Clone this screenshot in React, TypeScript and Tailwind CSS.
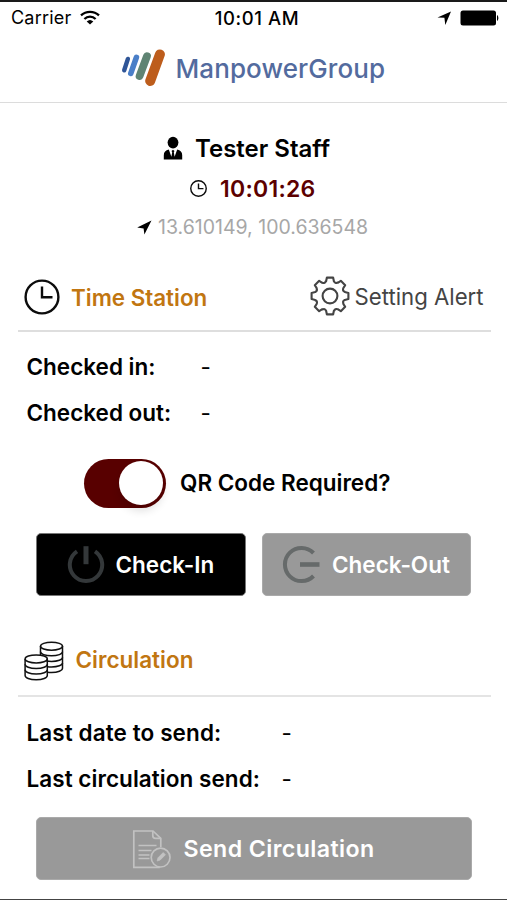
import type { ReactNode } from "react"

const teeth = [0, 45, 90, 135, 180, 225, 270, 315]

function gearPath() {
  const point = (x: number, y: number, deg: number) => {
    const a = (deg * Math.PI) / 180
    const px = 20 + x * Math.cos(a) - y * Math.sin(a)
    const py = 20 + x * Math.sin(a) + y * Math.cos(a)
    return `${px.toFixed(2)} ${py.toFixed(2)}`
  }
  return (
    teeth
      .map(
        (deg, i) =>
          `${i === 0 ? "M" : "L"}${point(-3.9, -14.8, deg)} L${point(-3.1, -18.4, deg)} L${point(3.1, -18.4, deg)} L${point(3.9, -14.8, deg)} Q${point(5.4, -12.2, deg)} ${point(7.2, -13.4, deg)}`
      )
      .join(" ") + " Z"
  )
}

function WifiIcon() {
  return (
    <svg className="mb-[2px] ml-[9px] h-[15px] w-[20px]" viewBox="0 0 20 15" fill="none" stroke="#000" strokeWidth="2.3">
      <path d="M1 5.4a13 13 0 0 1 18 0" />
      <path d="M4.4 9a8 8 0 0 1 11.2 0" />
      <path d="M10 14.6 6.7 11.6a4.8 4.8 0 0 1 6.6 0Z" fill="#000" stroke="none" />
    </svg>
  )
}

function Logo() {
  return (
    <svg className="h-[40px] w-[46px]" viewBox="0 0 46 40" fill="none" strokeLinecap="round">
      <path d="M8.9 10.9 5.2 22.3" stroke="#2f5597" strokeWidth="4.4" />
      <path d="M17.4 9.3 11.8 25.4" stroke="#4a7fc8" strokeWidth="5.6" />
      <path d="M28 8.2 20.6 28" stroke="#5f8473" strokeWidth="7.8" />
      <path d="M40.9 6.4 31.2 33" stroke="#bd5d1c" strokeWidth="10" />
    </svg>
  )
}

function UserIcon() {
  return (
    <svg className="-mt-[2px] h-[24px] w-[20px]" viewBox="0 0 20 24">
      <ellipse cx="10" cy="6.6" rx="5.4" ry="5.8" />
      <path d="M.8 23.4v-4.2c0-3.2 1.8-4.8 5-5.6l2.6 7.2.8-4.6-.7-1.2L10 13.8l1.5 1.2-.7 1.2.8 4.6 2.6-7.2c3.2.8 5 2.4 5 5.6v4.2z" />
    </svg>
  )
}

function ClockIcon({ className, width }: { className: string; width: number }) {
  return (
    <svg className={className} viewBox="0 0 36 36" fill="none" stroke="#0c0c0c" strokeWidth={width}>
      <circle cx="18" cy="18" r="16.4" />
      <path d="M18 7.5v10.8h10.5" />
    </svg>
  )
}

function CoinsIcon() {
  return (
    <svg className="mt-[2px] h-[40px] w-[40px]" viewBox="0 0 40 40" fill="none" stroke="#111" strokeWidth="1.5">
      <path d="M16.5 5v9.2M38.5 5v22.3c0 2.2-4.6 4.2-11 4.2-1.4 0-2.8-.1-4-.3" />
      <ellipse cx="27.5" cy="5.2" rx="11" ry="4" />
      <path d="M16.5 10.8c0 2.1 4.6 4 11 4s11-1.9 11-4M22.5 20c1.5.3 3.2.4 5 .4 6.4 0 11-1.9 11-4M23.5 25.7c1.2.2 2.6.3 4 .3 6.4 0 11-1.9 11-4" />
      <ellipse cx="12.2" cy="17.9" rx="11.1" ry="4" />
      <path d="M1.1 17.9v16.5c0 2.4 4.6 4.4 11.1 4.4s11.1-2 11.1-4.4V17.9" />
      <path d="M1.1 23.3c0 2.3 4.6 4.2 11.1 4.2s11.1-1.9 11.1-4.2M1.1 28.8c0 2.3 4.6 4.2 11.1 4.2s11.1-1.9 11.1-4.2" />
    </svg>
  )
}

function DocumentIcon() {
  return (
    <svg className="h-[40px] w-[40px]" viewBox="0 0 40 40" fill="none" stroke="#c2c2c2" strokeWidth="1.7">
      <path d="M28.8 18V9.4L21 2H1.8v36.4h26" />
      <path d="M20.8 2v4.8c0 1.8.8 2.6 2.6 2.6h5.4" />
      <path d="M6.5 16.5h18M6.5 21.5h13M6.5 26h11M6.5 29.5h11" />
      <circle cx="28.6" cy="28.6" r="9.4" />
      <path d="m25.2 32 .8-3.2 5.2-5.2 2.2 2.2-5.2 5.2z" fill="#c2c2c2" strokeWidth=".8" />
    </svg>
  )
}

function Field({ label, labelClass }: { label: string; labelClass: string }) {
  return (
    <div className="flex h-[46px] items-center pl-[26.5px] text-[22.5px] leading-none">
      <span className={labelClass}>{label}</span>
      <span>-</span>
    </div>
  )
}

function Button({ className, children }: { className: string; children: ReactNode }) {
  return (
    <button
      className={`flex h-[63px] items-center rounded-[5px] border-[1.5px] leading-none font-semibold text-white ${className}`}
    >
      {children}
    </button>
  )
}

export default function App() {
  return (
    <div className="h-[900px] w-[507px] overflow-hidden border-t-2 border-b border-t-[#1a1a1a] border-b-[#444] bg-white font-['Inter',sans-serif] text-black">
      <div className="grid h-[32px] grid-cols-3 items-center px-[10px] text-[18px] leading-none">
        <div className="flex items-center">
          <span className="pl-px tracking-[0.2px]">Carrier</span>
          <WifiIcon />
        </div>
        <span className="pl-[7px] text-center text-[18.5px] font-medium tracking-[0.6px]">10:01 AM</span>
        <div className="flex items-center justify-end">
          <svg className="mr-[9px] h-[14px] w-[14px]" viewBox="0 0 14 14">
            <path d="M14 .5 8.3 14l-.9-7.3L.5 6.4z" />
          </svg>
          <svg className="-mr-[2px] h-[16px] w-[39px]" viewBox="0 0 39 16">
            <rect x=".5" y=".5" width="35.5" height="15" rx="2.5" />
            <path d="M37 5c1.8.8 1.8 5.2 0 6z" />
          </svg>
        </div>
      </div>

      <header className="flex h-[69px] items-center border-b border-[#dcdcdc] pl-[119px]">
        <Logo />
        <span className="mt-[2px] ml-[10.5px] text-[26px] leading-none font-medium tracking-[0.1px] text-[#536b9e]">
          ManpowerGroup
        </span>
      </header>

      <div className="flex h-[162px] flex-col pt-[25px]">
        <div className="flex h-[41px] items-center pl-[163px]">
          <UserIcon />
          <span className="ml-[12px] text-[24px] leading-none font-semibold">Tester Staff</span>
        </div>
        <div className="flex h-[40px] items-center pl-[190px]">
          <ClockIcon className="-mt-px h-[17px] w-[17px]" width={3} />
          <span className="ml-[13px] text-[23px] leading-none font-semibold tracking-[0.25px] text-[#5c0000]">10:01:26</span>
        </div>
        <div className="flex h-[37px] items-center pl-[137px]">
          <svg className="h-[15px] w-[15px]" viewBox="0 0 15 15">
            <path d="M14.5.5 7.4 14.5 6.6 8.4.2 7.4z" />
          </svg>
          <span className="ml-[6px] text-[19.5px] leading-none text-[#a7a7a7]">13.610149, 100.636548</span>
        </div>
      </div>

      <section>
        <div className="mr-[16px] ml-[18px] flex h-[67px] items-center border-b-2 border-[#dedede] pl-[6px]">
          <ClockIcon className="-mt-px h-[36px] w-[36px]" width={2.4} />
          <h2 className="mt-px ml-[11px] w-[239px] text-[22.4px] leading-none font-semibold text-[#c17611]">
            Time Station
          </h2>
          <svg
            className="mb-[3px] h-[40px] w-[40px]"
            viewBox="0 0 40 40"
            fill="none"
            stroke="#444"
            strokeWidth="2.1"
            strokeLinejoin="round"
          >
            <path d={gearPath()} />
            <circle cx="20" cy="20" r="7.4" />
          </svg>
          <span className="mb-px ml-[4.5px] text-[22.2px] leading-none whitespace-nowrap text-[#444]">Setting Alert</span>
        </div>
        <div className="pt-[12px]">
          <Field label="Checked in:" labelClass="w-[174px] font-semibold" />
          <Field label="Checked out:" labelClass="w-[174px] font-semibold" />
        </div>
        <div className="flex h-[94px] items-center pl-[84px]">
          <div className="flex h-[49px] w-[82px] items-center justify-end rounded-full bg-[#580000] pr-[3px]">
            <div className="h-[44px] w-[44px] rounded-full bg-white shadow-[0_6px_8px_rgba(0,0,0,0.12)]" />
          </div>
          <span className="ml-[14px] text-[22.5px] leading-none font-semibold">QR Code Required?</span>
        </div>
        <div className="flex gap-4 px-[36px] pt-[3px] text-[22.5px]">
          <Button className="w-[210px] border-[#777] bg-black pl-[30px]">
            <svg className="h-[40px] w-[38px]" viewBox="0 0 38 40" fill="none" stroke="#34383a" strokeWidth="4">
              <path d="M10 6.3a16.2 16.2 0 1 0 18 0" />
              <path d="M19 1.2v18" strokeWidth="5" />
            </svg>
            <span className="mt-px ml-[10.5px]">Check-In</span>
          </Button>
          <Button className="w-[210px] border-[#aaa] bg-[#999] pl-[19px]">
            <svg className="h-[40px] w-[40px]" viewBox="0 0 40 40" fill="none" stroke="#666a6a" strokeWidth="4">
              <path d="M31.5 8a16.6 16.6 0 1 0 0 23" />
              <path d="M18 19.5H37.5" strokeWidth="4.6" />
            </svg>
            <span className="mt-px ml-[10.5px]">Check-Out</span>
          </Button>
        </div>
      </section>

      <section className="pt-[28px]">
        <div className="mr-[16px] ml-[18px] flex h-[73px] items-center border-b-2 border-[#e4e4e4] pl-[6px]">
          <CoinsIcon />
          <h2 className="mt-px ml-[11.5px] text-[22.5px] leading-none font-semibold text-[#c17611]">Circulation</h2>
        </div>
        <div className="pt-[13px]">
          <Field label="Last date to send:" labelClass="w-[255px] font-semibold tracking-[0.1px]" />
          <Field label="Last circulation send:" labelClass="w-[255px] font-semibold tracking-[0.05px]" />
        </div>
        <div className="px-[36px] pt-[15px] text-[23.2px]">
          <Button className="w-[436px] border-[#aaa] bg-[#999] pl-[95px]">
            <DocumentIcon />
            <span className="mt-[3px] ml-[11.5px] tracking-[0.4px]">Send Circulation</span>
          </Button>
        </div>
      </section>
    </div>
  )
}
